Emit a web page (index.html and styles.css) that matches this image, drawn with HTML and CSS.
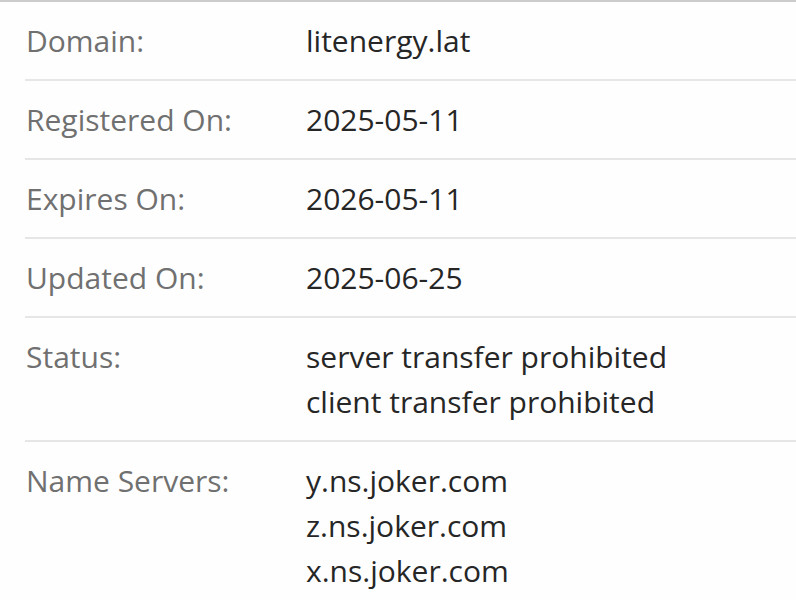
FILE: index.html
```html
<!DOCTYPE html>
<html lang="en">
<head>
<meta charset="utf-8">
<title>Whois</title>
<link rel="stylesheet" href="styles.css">
</head>
<body>
<div class="panel">
  <div class="row"><div class="label">Domain:</div><div class="value">litenergy.lat</div></div>
  <div class="row"><div class="label">Registered On:</div><div class="value">2025-05-11</div></div>
  <div class="row"><div class="label">Expires On:</div><div class="value">2026-05-11</div></div>
  <div class="row"><div class="label">Updated On:</div><div class="value">2025-06-25</div></div>
  <div class="row"><div class="label">Status:</div><div class="value">server transfer prohibited<br>client transfer prohibited</div></div>
  <div class="row"><div class="label">Name Servers:</div><div class="value">y.ns.joker.com<br>z.ns.joker.com<br>x.ns.joker.com</div></div>
</div>
</body>
</html>
```
FILE: styles.css
```css
html, body {
  margin: 0;
  padding: 0;
  background: #fefefe;
}
body {
  font-family: "Open Sans", "Noto Sans", sans-serif;
  font-size: 30px;
  line-height: 45px;
}
.panel {
  border-top: 2px solid #cbcbcb;
  padding-left: 25px;
}
.row {
  display: flex;
  padding: 16px 0;
  border-bottom: 2px solid #e6e6e6;
}
.label {
  width: 281px;
  flex: none;
  padding-left: 1px;
  box-sizing: border-box;
  color: #707070;
}
.value {
  color: #262626;
}
```
